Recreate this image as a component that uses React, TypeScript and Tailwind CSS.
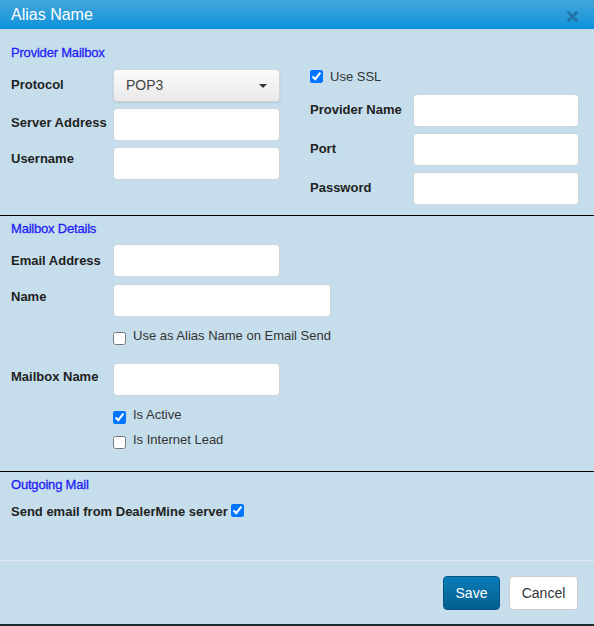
import React from 'react';

const labelCls = 'w-[102px] shrink-0 font-bold text-[13px] leading-[15px] text-[#222]';
const inputCls =
  'h-[33px] bg-white border border-[#cfd6db] rounded-[4px] outline-none px-2 text-[13px]';
const headingCls =
  'text-[13px] leading-[16px] text-[#1e1ef5] tracking-[-0.2px] [-webkit-text-stroke:0.3px_#1e1ef5]';

function Field({ label, width = 167, pt = 7 }: { label: string; width?: number; pt?: number }) {
  return (
    <div className="flex items-start">
      <div className={labelCls} style={{ paddingTop: pt }}>
        {label}
      </div>
      <input className={inputCls} style={{ width }} />
    </div>
  );
}

function Check({ label, checked }: { label: string; checked?: boolean }) {
  return (
    <label className="flex items-start h-[17px]">
      <input type="checkbox" defaultChecked={checked} className="m-0 mt-[4px] w-[13px] h-[13px]" />
      <span className="ml-[7px] text-[13px] leading-[15px] text-[#333]">{label}</span>
    </label>
  );
}

export default function App() {
  return (
    <div className="w-[594px] h-[626px] flex flex-col bg-[#c6deec] border-b-2 border-[#1d2b33] font-['Liberation_Sans',Arial,sans-serif] text-[#222] overflow-hidden">
      {/* Title bar */}
      <div className="h-[29px] shrink-0 flex items-center justify-between pl-[11px] pr-[16px] bg-gradient-to-b from-[#40a6da] to-[#0592db]">
        <span className="text-white text-[16px] leading-[18px]">Alias Name</span>
        <svg width="11" height="11" viewBox="0 0 11 11" className="mt-[3px]">
          <path d="M1.5 1.5 L9.5 9.5 M9.5 1.5 L1.5 9.5" stroke="#2272a8" strokeWidth="2.6" strokeLinecap="round" />
        </svg>
      </div>

      {/* Provider Mailbox */}
      <div className="pt-[16px] pb-[10px] pl-[11px] border-b border-black">
        <div className={headingCls}>Provider Mailbox</div>
        <div className="flex mt-[8px]">
          <div className="flex flex-col gap-[6px]">
            <div className="flex items-start">
              <div className={labelCls} style={{ paddingTop: 8 }}>
                Protocol
              </div>
              <div className="w-[167px] h-[33px] rounded-[4px] border border-[#d2d6d9] bg-gradient-to-b from-[#fbfbfb] to-[#e9e9e9] shadow-[0_1px_2px_rgba(0,0,0,0.12)] flex items-center pl-[12px] pr-[12px] justify-between">
                <span className="text-[14px] text-[#444]">POP3</span>
                <svg width="8" height="4" viewBox="0 0 8 4">
                  <path d="M0 0 L8 0 L4 4 Z" fill="#333" />
                </svg>
              </div>
            </div>
            <Field label="Server Address" />
            <Field label="Username" pt={4} />
          </div>

          <div className="flex flex-col gap-[6px] ml-[30px]">
            <label className="flex items-start h-[18px] mt-[1px]">
              <input type="checkbox" defaultChecked className="m-0 w-[13px] h-[13px]" />
              <span className="ml-[7px] text-[13px] leading-[13px] text-[#333]">Use SSL</span>
            </label>
            <div className="flex items-start">
              <div className="w-[103px] shrink-0 font-bold text-[13px] leading-[15px] pt-[8px]">Provider Name</div>
              <input className={inputCls} style={{ width: 166 }} />
            </div>
            <div className="flex items-start">
              <div className="w-[103px] shrink-0 font-bold text-[13px] leading-[15px] pt-[8px]">Port</div>
              <input className={inputCls} style={{ width: 166 }} />
            </div>
            <div className="flex items-start">
              <div className="w-[103px] shrink-0 font-bold text-[13px] leading-[15px] pt-[8px]">Password</div>
              <input className={inputCls} style={{ width: 166 }} />
            </div>
          </div>
        </div>
      </div>

      {/* Mailbox Details */}
      <div className="pt-[5px] pb-[22px] pl-[11px] border-b border-black">
        <div className={headingCls}>Mailbox Details</div>
        <div className="mt-[7px] flex flex-col">
          <Field label="Email Address" pt={9} />
          <div className="mt-[7px]">
            <Field label="Name" width={218} pt={5} />
          </div>
          <div className="mt-[11px] pl-[102px]">
            <Check label="Use as Alias Name on Email Send" />
          </div>
          <div className="mt-[18px]">
            <Field label="Mailbox Name" pt={6} />
          </div>
          <div className="mt-[11px] pl-[102px]">
            <Check label="Is Active" checked />
          </div>
          <div className="mt-[8px] pl-[102px]">
            <Check label="Is Internet Lead" />
          </div>
        </div>
      </div>

      {/* Outgoing Mail */}
      <div className="flex-1 pt-[5px] pl-[11px] border-b border-[#e1ebf1]">
        <div className={headingCls}>Outgoing Mail</div>
        <label className="mt-[11px] flex items-start">
          <span className="font-bold text-[13px] leading-[15px]">Send email from DealerMine server</span>
          <input type="checkbox" defaultChecked className="m-0 ml-[3px] w-[13px] h-[13px]" />
        </label>
      </div>

      {/* Footer */}
      <div className="shrink-0 flex justify-end gap-[9px] pt-[15px] pb-[14px] pr-[16px]">
        <button className="w-[57px] h-[34px] rounded-[4px] border border-[#045585] bg-gradient-to-b from-[#0b7cb9] to-[#04608f] text-white text-[14px]">
          Save
        </button>
        <button className="w-[69px] h-[34px] rounded-[4px] border border-[#cccccc] bg-white text-[#333] text-[14px]">
          Cancel
        </button>
      </div>
    </div>
  );
}
